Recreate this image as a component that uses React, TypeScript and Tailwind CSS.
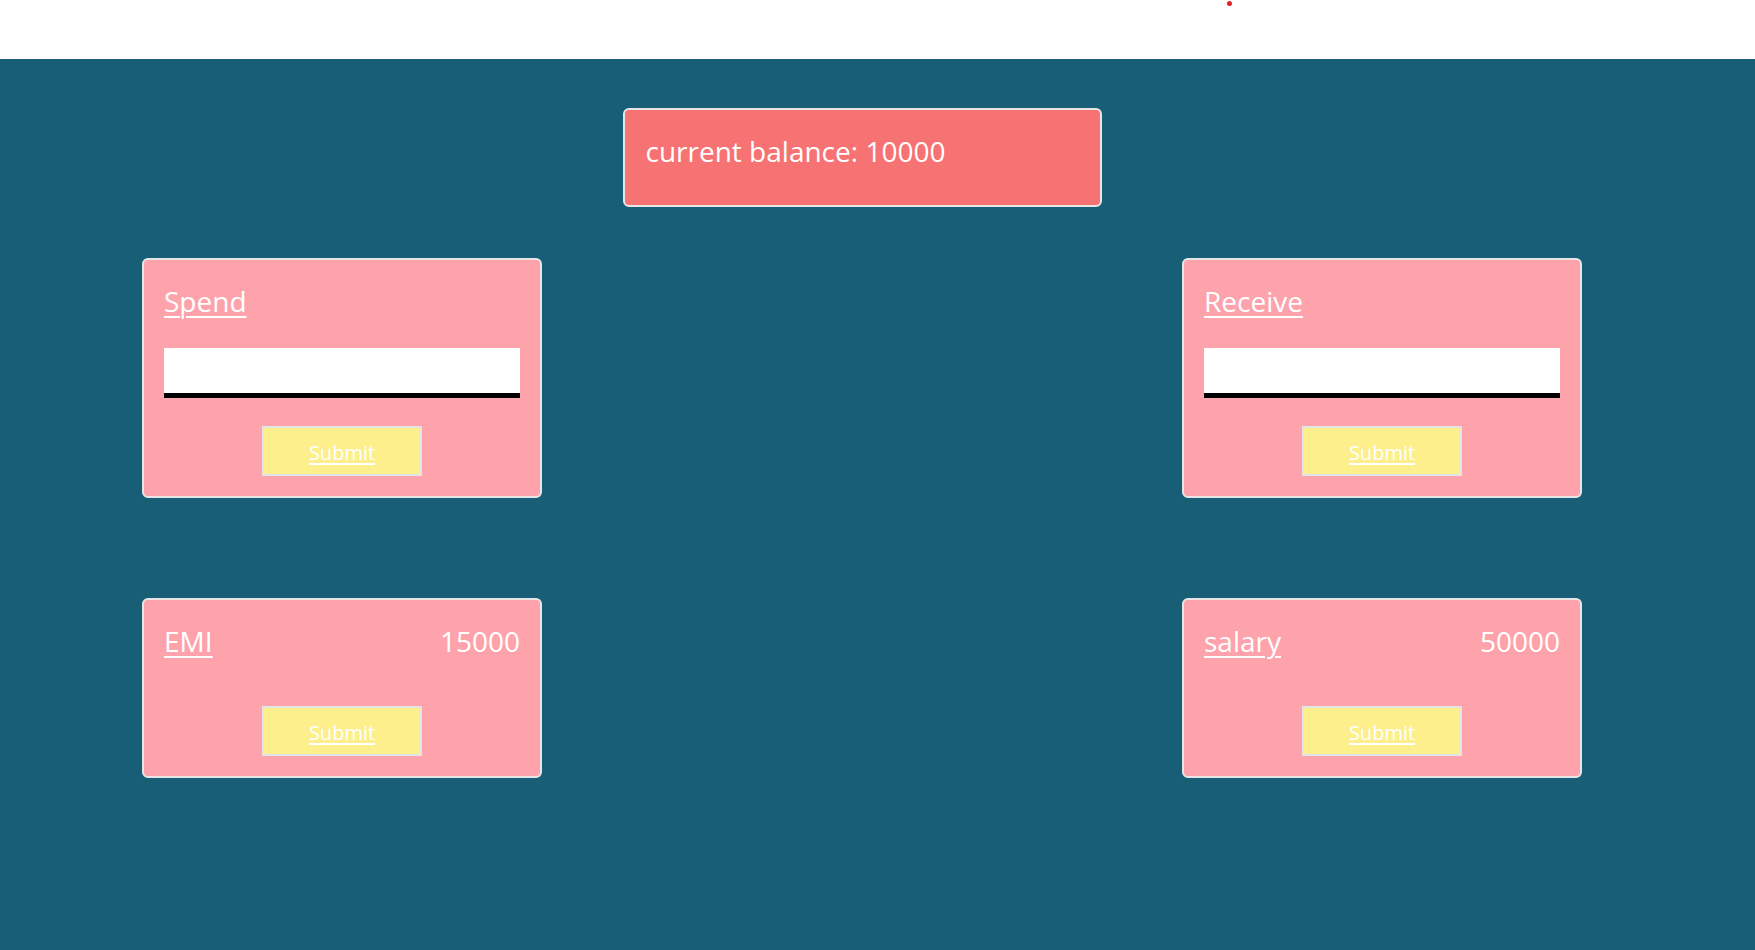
import { useState } from "react";

type TxCard = {
  label: string;
  kind: "input" | "fixed";
  amount?: number;
};

const TOP_ROW: TxCard[] = [
  { label: "Spend", kind: "input" },
  { label: "Receive", kind: "input" },
];

const BOTTOM_ROW: TxCard[] = [
  { label: "EMI", kind: "fixed", amount: 15000 },
  { label: "salary", kind: "fixed", amount: 50000 },
];

function SubmitButton() {
  return (
    <button
      type="button"
      className="mx-auto flex h-[50px] w-[160px] items-center justify-center border-2 border-[#e4e4e4] bg-[#fdef8b] pt-[4px] text-[20px] text-white underline underline-offset-[3px]"
    >
      Submit
    </button>
  );
}

function Card({ card }: { card: TxCard }) {
  const [value, setValue] = useState("");

  if (card.kind === "input") {
    return (
      <div className="flex h-[240px] w-[400px] flex-col rounded-[6px] border-2 border-[#e6e6e6] bg-[#fea3ac] px-[20px] pt-[22px]">
        <a href="#" className="self-start text-[28px] leading-[38px] text-white underline decoration-2 underline-offset-[4px]">
          {card.label}
        </a>
        <input
          value={value}
          onChange={(e) => setValue(e.target.value)}
          className="mt-[28px] h-[50px] w-full border-0 border-b-[5px] border-black bg-white px-2 text-[20px] outline-none"
        />
        <div className="mt-[28px]">
          <SubmitButton />
        </div>
      </div>
    );
  }

  return (
    <div className="flex h-[180px] w-[400px] flex-col rounded-[6px] border-2 border-[#e6e6e6] bg-[#fea3ac] px-[20px] pt-[22px]">
      <div className="flex items-start justify-between text-[28px] leading-[38px] text-white">
        <a href="#" className="underline decoration-2 underline-offset-[4px]">
          {card.label}
        </a>
        <span>{card.amount}</span>
      </div>
      <div className="mt-[46px]">
        <SubmitButton />
      </div>
    </div>
  );
}

export default function App() {
  const balance = 10000;

  return (
    <div className="flex h-[950px] w-full flex-col font-['Open_Sans',sans-serif]">
      {/* top strip */}
      <div className="relative h-[59px] bg-white">
        <span className="absolute left-[1227px] top-[1px] h-[5px] w-[5px] rounded-full bg-[#e5202a]" />
      </div>

      <div className="flex-1 bg-[#175e76] pl-[142px] pt-[49px]">
        <div className="w-[1440px]">
          <div className="mx-auto h-[99px] w-[479px] rounded-[6px] border-2 border-[#e6e6e6] bg-[#f77272] px-[21px] pt-[22px] text-[28px] leading-[38px] text-white">
            current balance: {balance}
          </div>

          <div className="mt-[51px] flex justify-between">
            {TOP_ROW.map((c) => (
              <Card key={c.label} card={c} />
            ))}
          </div>

          <div className="mt-[100px] flex justify-between">
            {BOTTOM_ROW.map((c) => (
              <Card key={c.label} card={c} />
            ))}
          </div>
        </div>
      </div>
    </div>
  );
}
